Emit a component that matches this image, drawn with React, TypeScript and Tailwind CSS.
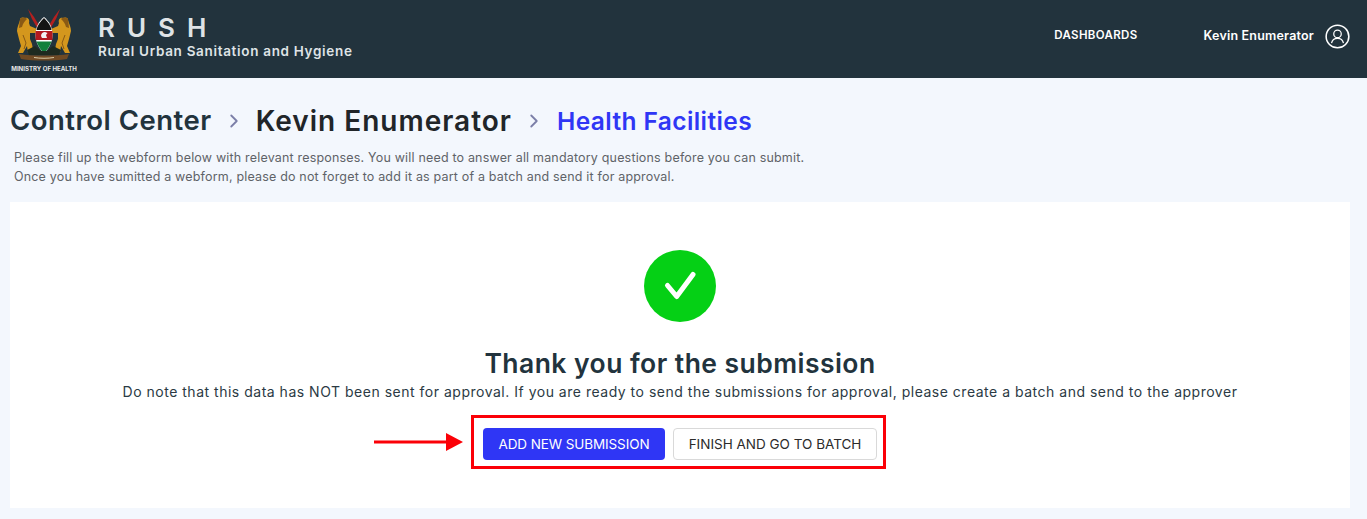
import { ChevronRight } from "lucide-react"

const Crest = () => (
  <svg viewBox="0 0 60 52" className="w-[60px] h-[52px]">
    {/* spears */}
    <path d="M14 0 L20 8 L33 30 L30 31 L17.500 9Z" fill="#b3201f" />
    <path d="M46 0 L40 8 L27 30 L30 31 L42.500 9Z" fill="#b3201f" />
    {/* lions */}
    <path d="M6 11 C6 8 9 8 11 9 C14 8 16 11 15 14 L16 17 L23 20 L23 24 L16 24 L16 30 L18 35 L19 41 L20 44 L14 44 L13 37 L9 44 L4 44 L7 37 L5 30 L3 22 C3 18 5 15 6 11Z" fill="#d4971d" />
    <path d="M54 11 C54 8 51 8 49 9 C46 8 44 11 45 14 L44 17 L37 20 L37 24 L44 24 L44 30 L42 35 L41 41 L40 44 L46 44 L47 37 L51 44 L56 44 L53 37 L55 30 L57 22 C57 18 55 15 54 11Z" fill="#d4971d" />
    <path d="M6 10 C8 8 11 8 13 10 C11 12 9 14 8 18 L5 19Z" fill="#8a5a14" />
    <path d="M54 10 C52 8 49 8 47 10 C49 12 51 14 52 18 L55 19Z" fill="#8a5a14" />
    <path d="M9 26 L12 34 L10 40" stroke="#8a5a14" strokeWidth="1" fill="none" />
    <path d="M51 26 L48 34 L50 40" stroke="#8a5a14" strokeWidth="1" fill="none" />
    {/* shield */}
    <path d="M30 8 C35 12 38.500 18 38.500 26 C38.500 34 34 40 30 45 C26 40 21.500 34 21.500 26 C21.500 18 25 12 30 8Z" fill="#ffffff" />
    <path d="M30 9 C34 13 37 17 37.500 21 L22.500 21 C23 17 26 13 30 9Z" fill="#141414" />
    <rect x="21.500" y="22" width="17" height="9" fill="#b3191f" />
    <path d="M22.500 32.500 L37.500 32.500 C36 37 33 41 30 44.500 C27 41 24 37 22.500 32.500Z" fill="#12803c" />
    <path d="M27 27 C27 24.500 29 23 31 23 L33.500 24 L32 26 L33 29 L28 29Z" fill="#f2f2f2" />
    {/* mount and ribbon */}
    <path d="M13 41 L21 37 L27 42 L33 42 L39 37 L47 41 L45 46 L15 46Z" fill="#1d2a20" />
    <path d="M5 45 C18 47 42 47 55 45 L53 50 C40 52 20 52 7 50Z" fill="#6f4a24" />
    <path d="M20 48.500 C26 49.500 34 49.500 40 48.500" stroke="#d8c9a5" strokeWidth="1" fill="none" />
  </svg>
)

const UserIcon = () => (
  <svg viewBox="0 0 26 26" fill="none" stroke="white" className="w-[25px] h-[25px]">
    <circle cx="13" cy="13" r="11.800" strokeWidth="1.600" />
    <circle cx="13" cy="10.300" r="3.900" strokeWidth="1.300" />
    <path d="M6.800 20 C7.500 16.500 10 15 13 15 C16 15 18.500 16.500 19.200 20" strokeWidth="1.300" />
  </svg>
)

const Header = () => (
  <header className="h-[78px] bg-[#22333d] flex items-center justify-between pl-[10px] pr-[17px]">
    <div className="flex items-center">
      <div className="w-[68px] self-start pt-[4px] flex flex-col items-center">
        <Crest />
        <span className="text-[6.100px] leading-[8px] font-bold text-[#e8e8e8] whitespace-nowrap mt-[4px]">MINISTRY OF HEALTH</span>
      </div>
      <div className="ml-[20px] pb-[5px]">
        <div className="text-[26px] leading-[30px] font-semibold text-[#dfe3e6] tracking-[0.46em]">RUSH</div>
        <div className="text-[13.500px] leading-[18px] font-semibold text-[#dfe3e6] tracking-[0.68px] -mt-[1px]">Rural Urban Sanitation and Hygiene</div>
      </div>
    </div>
    <div className="flex items-center mb-[6px]">
      <a className="text-[11.500px] font-semibold text-white mr-[66px] tracking-[0.35px] pb-[1px]">DASHBOARDS</a>
      <span className="text-[12.500px] font-semibold text-white mr-[11px] tracking-[0.2px]">Kevin Enumerator</span>
      <UserIcon />
    </div>
  </header>
)

const Breadcrumbs = () => (
  <div className="flex items-center h-[40px] pl-[10px]">
    <span className="text-[27.500px] font-semibold text-[#22333d] whitespace-nowrap tracking-[0.5px]">Control Center</span>
    <ChevronRight className="size-[22px] text-[#7b7fa8] ml-[11px] mr-[11px]" strokeWidth={2} />
    <span className="text-[28px] font-semibold text-[#212529] whitespace-nowrap tracking-[1px]">Kevin Enumerator</span>
    <ChevronRight className="size-[22px] text-[#7b7fa8] ml-[11px] mr-[12px]" strokeWidth={2} />
    <span className="text-[24.500px] font-semibold text-[#2f36f5] whitespace-nowrap tracking-[0.4px]">Health Facilities</span>
  </div>
)

export default function App() {
  return (
    <div className="h-[519px] overflow-hidden bg-[#f3f7fd] font-['Inter',sans-serif]">
      <Header />
      <div className="pt-[23px]">
        <Breadcrumbs />
        <div className="pl-[14px] mt-[7px] text-[12.500px] leading-[19px] text-[#5f6368] tracking-[0.18px]">
          <p>Please fill up the webform below with relevant responses. You will need to answer all mandatory questions before you can submit.</p>
          <p>Once you have sumitted a webform, please do not forget to add it as part of a batch and send it for approval.</p>
        </div>
        <main className="mt-[16px] ml-[10px] w-[1340px] h-[306px] bg-white flex flex-col items-center pt-[48px]">
          <div className="w-[72px] h-[72px] rounded-full bg-[#05d015] flex items-center justify-center">
            <svg viewBox="0 0 72 72" className="w-[72px] h-[72px]" fill="none">
              <path d="M23.500 35.500 L32.700 46.500 L49 24.500" stroke="white" strokeWidth="5" strokeLinecap="round" strokeLinejoin="round" />
            </svg>
          </div>
          <h2 className="text-[26.500px] leading-[32px] font-semibold text-[#22333d] mt-[25px] tracking-[0.45px]">Thank you for the submission</h2>
          <p className="text-[14px] leading-[20px] text-[#2b3a44] mt-[3px] tracking-[0.51px]">Do note that this data has NOT been sent for approval. If you are ready to send the submissions for approval, please create a batch and send to the approver</p>
          <div className="relative mt-[13px] mr-[3px] border-[3px] border-[#fb0007] pl-[9px] pr-[6px] pt-[10px] pb-[6px] flex gap-[8px]">
            <svg viewBox="0 0 89 18" className="absolute w-[89px] h-[18px] left-[-100px] top-[15px]">
              <path d="M0 9 H74" stroke="#fb0007" strokeWidth="3" />
              <path d="M72 0 L89 9 L72 18Z" fill="#fb0007" />
            </svg>
            <button className="h-[32px] w-[182px] rounded-[4px] bg-[#2f36f5] text-white text-[13.500px] tracking-[-0.1px]">ADD NEW SUBMISSION</button>
            <button className="h-[32px] w-[204px] rounded-[4px] bg-white border border-[#d9d9d9] text-[#2b2b2b] text-[13.500px]">FINISH AND GO TO BATCH</button>
          </div>
        </main>
      </div>
    </div>
  )
}
